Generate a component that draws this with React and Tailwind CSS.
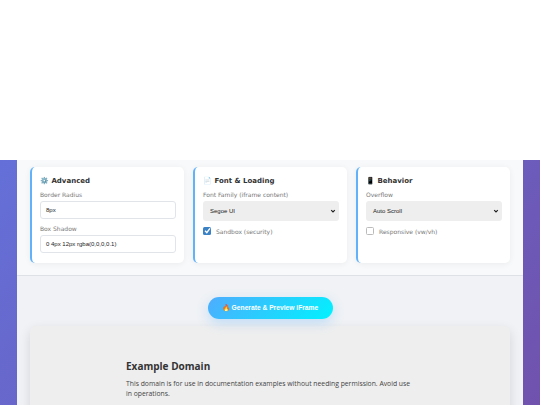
export default function App() {
  return (
    <div className="w-[540px] h-[405px] overflow-hidden bg-white flex flex-col [will-change:opacity]">
      <div className="h-[160px] shrink-0 bg-white" />
      <div className="flex-1 min-h-0 px-[17px] bg-[linear-gradient(135deg,#6470d8,#7052ad)] [font-family:'DejaVu_Sans',sans-serif]">
        <div className="h-full overflow-hidden bg-[#f8f9fa] flex flex-col">
          <div className="h-[116px] shrink-0 border-b border-[#dee2e6] pt-[7px] px-[13px] grid grid-cols-3 gap-[9px] items-start">
            <Card icon="⚙️" title="Advanced">
              <Label>Border Radius</Label>
              <Input value="8px" />
              <Label className="mt-[5px]">Box Shadow</Label>
              <Input value="0 4px 12px rgba(0,0,0,0.1)" />
            </Card>
            <Card icon="📄" title="Font & Loading">
              <Label>Font Family (iframe content)</Label>
              <Select value="Segoe UI" />
              <Check checked label="Sandbox (security)" />
            </Card>
            <Card icon="📱" title="Behavior">
              <Label>Overflow</Label>
              <Select value="Auto Scroll" />
              <Check label="Responsive (vw/vh)" />
            </Card>
          </div>
          <div className="flex-1 min-h-0 bg-[#f0f2f5] px-[13px] pt-[21px]">
            <div className="flex justify-center">
              <div className="h-[22px] w-[125px] rounded-full bg-[linear-gradient(135deg,#4facfe,#00f2fe)] shadow-[0_4px_12px_rgba(79,172,254,0.3)] text-white font-bold text-[6.7px] [font-family:'Liberation_Sans',sans-serif] flex items-center justify-center whitespace-nowrap">
                🔥 Generate &amp; Preview iFrame
              </div>
            </div>
            <div className="mt-[7px] h-[120px] rounded-[6px] bg-[#eeeeee] shadow-[0_4px_12px_rgba(0,0,0,0.12)] pl-[96px] pr-[96px] pt-[33px] [font-family:'Open_Sans',sans-serif]">
              <h1 className="text-[10px] leading-[14px] font-bold text-[#333]">Example Domain</h1>
              <p className="mt-[6px] text-[6.8px] leading-[10px] text-[#444]">
                This domain is for use in documentation examples without needing permission. Avoid use in operations.
              </p>
            </div>
          </div>
        </div>
      </div>
    </div>
  );
}

function Card({ icon, title, children }) {
  return (
    <div className="h-[96px] bg-white rounded-[5px] border-l-[2px] border-[#62b2fb] shadow-[0_1px_6px_rgba(0,0,0,0.06)] pl-[8px] pr-[8px] pt-[9px]">
      <div className="text-[7px] leading-[10px] font-bold text-[#333] whitespace-nowrap">{icon} {title}</div>
      <div className="mt-[4px]">{children}</div>
    </div>
  );
}

function Label({ children, className = "" }) {
  return <div className={`text-[6px] leading-[9px] text-[#777] whitespace-nowrap ${className}`}>{children}</div>;
}

function Input({ value }) {
  return (
    <div className="mt-[2px] h-[18px] w-[136px] bg-white border border-[#e1e5e9] rounded-[3px] px-[5px] flex items-center text-[6px] text-[#222] [font-family:'Liberation_Sans',sans-serif] whitespace-nowrap">
      {value}
    </div>
  );
}

function Select({ value }) {
  return (
    <div className="mt-[2px] h-[20px] w-[136px] bg-[#eeeeee] rounded-[3px] pl-[7px] pr-[3px] flex items-center justify-between text-[6px] text-[#222] [font-family:'Liberation_Sans',sans-serif] whitespace-nowrap">
      <span>{value}</span>
      <svg width="6" height="6" viewBox="0 0 10 10" fill="none" stroke="#222" strokeWidth="2"><path d="M2 3.5 5 6.5 8 3.5" /></svg>
    </div>
  );
}

function Check({ checked, label }) {
  return (
    <div className="mt-[5px] flex items-center gap-[5px]">
      {checked ? (
        <div className="w-[8px] h-[8px] rounded-[1.5px] bg-[#3b82c4] flex items-center justify-center">
          <svg width="7" height="7" viewBox="0 0 10 10" fill="none" stroke="#fff" strokeWidth="2"><path d="M1.5 5.5 4 8 8.5 2" /></svg>
        </div>
      ) : (
        <div className="w-[8px] h-[8px] rounded-[1.5px] bg-white border border-[#bbb]" />
      )}
      <span className="text-[6px] leading-[9px] text-[#777] whitespace-nowrap relative top-[1px]">{label}</span>
    </div>
  );
}
